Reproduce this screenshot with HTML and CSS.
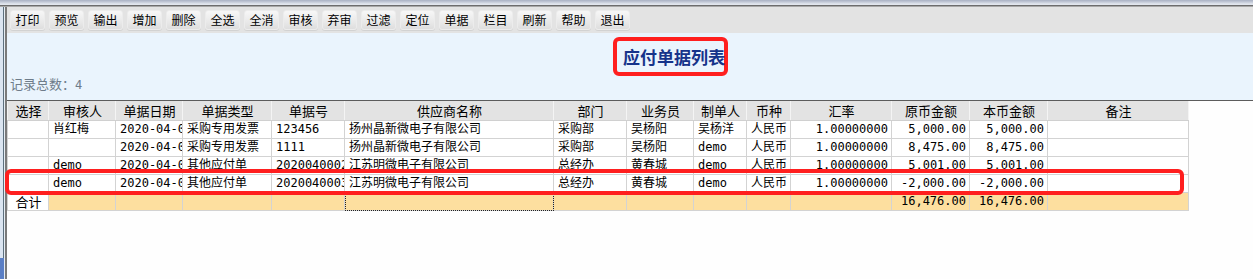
FILE: index.html
```html
<!DOCTYPE html>
<html lang="zh-CN">
<head>
    <meta charset="UTF-8">
    <meta name="viewport" content="width=device-width, initial-scale=1.0">
    <title>应付单据列表</title>
    <link rel="stylesheet" href="styles.css">
</head>
<body>
    <div class="topbar"></div>
    <div class="frame">
        <div class="side">
            <div class="side-tab"></div>
        </div>
        <div class="content">
            <div class="toolbar">
                <button>打印</button>
                <button>预览</button>
                <button>输出</button>
                <button>增加</button>
                <button>删除</button>
                <button>全选</button>
                <button>全消</button>
                <button>审核</button>
                <button>弃审</button>
                <button>过滤</button>
                <button>定位</button>
                <button>单据</button>
                <button>栏目</button>
                <button>刷新</button>
                <button>帮助</button>
                <button>退出</button>
            </div>

            <div class="info">
                <div class="title-row">
                    <h1 class="title">应付单据列表</h1>
                </div>
                <div class="count">记录总数：<span>4</span></div>
            </div>

            <div class="grid">
                <table>
                    <colgroup>
                        <col style="width:41px">
                        <col style="width:67px">
                        <col style="width:67px">
                        <col style="width:89px">
                        <col style="width:73px">
                        <col style="width:209px">
                        <col style="width:73px">
                        <col style="width:67px">
                        <col style="width:53px">
                        <col style="width:44px">
                        <col style="width:101px">
                        <col style="width:78px">
                        <col style="width:78px">
                        <col style="width:141px">
                    </colgroup>
                    <thead>
                        <tr>
                            <th>选择</th>
                            <th>审核人</th>
                            <th>单据日期</th>
                            <th>单据类型</th>
                            <th>单据号</th>
                            <th>供应商名称</th>
                            <th>部门</th>
                            <th>业务员</th>
                            <th>制单人</th>
                            <th>币种</th>
                            <th>汇率</th>
                            <th>原币金额</th>
                            <th>本币金额</th>
                            <th>备注</th>
                        </tr>
                    </thead>
                    <tbody>
                        <tr>
                            <td></td>
                            <td>肖红梅</td>
                            <td>2020-04-01</td>
                            <td>采购专用发票</td>
                            <td>123456</td>
                            <td>扬州晶新微电子有限公司</td>
                            <td>采购部</td>
                            <td>吴杨阳</td>
                            <td>吴杨洋</td>
                            <td>人民币</td>
                            <td class="num">1.00000000</td>
                            <td class="num">5,000.00</td>
                            <td class="num">5,000.00</td>
                            <td></td>
                        </tr>
                        <tr>
                            <td></td>
                            <td></td>
                            <td>2020-04-01</td>
                            <td>采购专用发票</td>
                            <td>1111</td>
                            <td>扬州晶新微电子有限公司</td>
                            <td>采购部</td>
                            <td>吴杨阳</td>
                            <td>demo</td>
                            <td>人民币</td>
                            <td class="num">1.00000000</td>
                            <td class="num">8,475.00</td>
                            <td class="num">8,475.00</td>
                            <td></td>
                        </tr>
                        <tr>
                            <td></td>
                            <td>demo</td>
                            <td>2020-04-01</td>
                            <td>其他应付单</td>
                            <td>2020040002</td>
                            <td>江苏明微电子有限公司</td>
                            <td>总经办</td>
                            <td>黄春城</td>
                            <td>demo</td>
                            <td>人民币</td>
                            <td class="num">1.00000000</td>
                            <td class="num">5,001.00</td>
                            <td class="num">5,001.00</td>
                            <td></td>
                        </tr>
                        <tr>
                            <td></td>
                            <td>demo</td>
                            <td>2020-04-01</td>
                            <td>其他应付单</td>
                            <td>2020040003</td>
                            <td>江苏明微电子有限公司</td>
                            <td>总经办</td>
                            <td>黄春城</td>
                            <td>demo</td>
                            <td>人民币</td>
                            <td class="num">1.00000000</td>
                            <td class="num">-2,000.00</td>
                            <td class="num">-2,000.00</td>
                            <td></td>
                        </tr>
                        <tr class="total">
                            <td class="total-label">合计</td>
                            <td></td>
                            <td></td>
                            <td></td>
                            <td></td>
                            <td class="focus"></td>
                            <td></td>
                            <td></td>
                            <td></td>
                            <td></td>
                            <td></td>
                            <td class="num">16,476.00</td>
                            <td class="num">16,476.00</td>
                            <td></td>
                        </tr>
                    </tbody>
                </table>
                <div class="row-mark"></div>
            </div>
        </div>
    </div>
</body>
</html>
```

FILE: styles.css
```css
html, body {
    margin: 0;
    padding: 0;
}

body {
    width: 1253px;
    height: 279px;
    overflow: hidden;
    background: #fefefe;
    font-family: "Noto Sans CJK SC", sans-serif;
    font-size: 12px;
    color: #000;
}

.topbar {
    height: 7px;
    background: linear-gradient(#a9b1c3 0, #c3c9d7 2px, #e2e6ee 4px, #e2e6ee 5px, #6c6c6c 5px, #6c6c6c 6px, #a8a8a8 6px, #a8a8a8 7px);
}

.frame {
    display: flex;
    height: 272px;
}

.side {
    width: 5px;
    display: flex;
    flex-direction: column;
    background: linear-gradient(to right, #dbe5f1 0 3px, #5d707e 3px 4px, #e6edf4 4px 5px);
}

.side-tab {
    margin-top: auto;
    height: 21px;
    width: 4px;
    background: #5b7fc5;
}

.content {
    flex: 1;
    display: flex;
    flex-direction: column;
    border-left: 2px solid #7a7a7a;
    background: #fefefe;
}

.toolbar {
    height: 26px;
    box-sizing: border-box;
    padding: 3px 0 0 3px;
    display: flex;
    gap: 4px;
    background: #e3e3e3;
}

.toolbar button {
    width: 35px;
    height: 20px;
    padding: 0;
    border: 1px solid #ececec;
    border-radius: 3px;
    background: linear-gradient(#f7f7f7, #e9e9e9 60%, #dedede);
    box-shadow: 0 1px 0 #d2d2d2;
    font-family: "Noto Sans CJK SC", sans-serif;
    font-size: 12px;
    line-height: 18px;
    color: #000;
}

.info {
    height: 67px;
    box-sizing: border-box;
    padding-top: 4px;
    background: #eaf4fd;
}

.title-row {
    height: 39px;
    padding-left: 606px;
}

.title {
    display: inline-block;
    box-sizing: border-box;
    width: 115px;
    height: 39px;
    margin: 0;
    padding: 6px 0 0 6px;
    border: 4px solid #ff1f1f;
    border-radius: 6px;
    font-size: 17px;
    line-height: 20px;
    font-weight: bold;
    color: #16338a;
    white-space: nowrap;
}

.count {
    padding-left: 3px;
    line-height: 16px;
    font-size: 13px;
    color: #6e7c8a;
}

.count span {
    font-family: "DejaVu Sans Mono", monospace;
    font-size: 12px;
}

.grid {
    position: relative;
    flex: 1;
    border-top: 1px solid #5c5c5c;
    background: #fefefe;
}

table {
    table-layout: fixed;
    width: 1181px;
    border-collapse: collapse;
    font-family: "DejaVu Sans Mono", "Noto Sans CJK SC", monospace;
    font-size: 12px;
}

th, td {
    height: 17px;
    padding: 0 3px 0 4px;
    border: 1px solid #d3d3d3;
    border-top: none;
    line-height: 17px;
    white-space: nowrap;
    overflow: hidden;
    text-align: left;
    font-weight: normal;
}

th {
    height: 19px;
    background: #e3e3e3;
    text-align: center;
    font-family: "Noto Sans CJK SC", sans-serif;
    font-size: 13px;
    border-color: #d0d0d0 #f4f4f4 #d0d0d0 #f4f4f4;
}

td {
    background: #fff;
}

td.num {
    text-align: right;
}

.total td {
    background: #fddf9f;
}

.total td.total-label {
    background: #fff;
    text-align: center;
    font-family: "Noto Sans CJK SC", sans-serif;
    font-size: 13px;
}

.total td.focus {
    outline: 1px dotted #222;
    outline-offset: -1px;
}

.row-mark {
    position: absolute;
    left: -2px;
    top: 68px;
    width: 1179px;
    height: 26px;
    box-sizing: border-box;
    border: 4px solid #ff1f1f;
    border-radius: 6px;
    pointer-events: none;
}
```
